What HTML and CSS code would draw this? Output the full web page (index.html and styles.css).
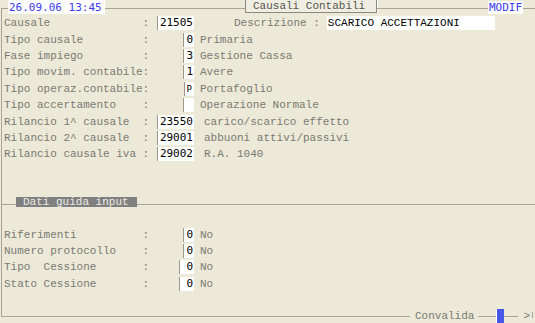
FILE: index.html
```
<!DOCTYPE html>
<html lang="it">
<head>
  <meta charset="UTF-8">
  <title>Causali Contabili</title>
  <link rel="stylesheet" href="styles.css">
</head>
<body>
  <div class="screen">
    <div class="topbar">
      <div class="corner"></div>
      <div class="stamp date">26.09.06 13:45</div>
      <div class="rule r1"></div>
      <div class="title">Causali Contabili</div>
      <div class="rule r2"></div>
      <div class="stamp mode">MODIF</div>
      <div class="rule"></div>
    </div>

    <div class="body">
      <div class="row">
        <span class="lbl">Causale              :</span>
        <span class="fld"><span class="box">21505</span></span>
        <span class="lbl desc-lbl">Descrizione :</span>
        <span class="box text-box">SCARICO ACCETTAZIONI</span>
      </div>
      <div class="row">
        <span class="lbl">Tipo causale         :</span>
        <span class="fld"><span class="box">0</span></span>
        <span class="desc">Primaria</span>
      </div>
      <div class="row">
        <span class="lbl">Fase impiego         :</span>
        <span class="fld"><span class="box">3</span></span>
        <span class="desc">Gestione Cassa</span>
      </div>
      <div class="row">
        <span class="lbl">Tipo movim. contabile:</span>
        <span class="fld"><span class="box">1</span></span>
        <span class="desc">Avere</span>
      </div>
      <div class="row">
        <span class="lbl">Tipo operaz.contabile:</span>
        <span class="fld"><span class="box small">P</span></span>
        <span class="desc">Portafoglio</span>
      </div>
      <div class="row">
        <span class="lbl">Tipo accertamento    :</span>
        <span class="fld"><span class="box"> </span></span>
        <span class="desc">Operazione Normale</span>
      </div>
      <div class="row">
        <span class="lbl">Rilancio 1^ causale  :</span>
        <span class="fld"><span class="box">23550</span></span>
        <span class="desc wide">carico/scarico effetto</span>
      </div>
      <div class="row">
        <span class="lbl">Rilancio 2^ causale  :</span>
        <span class="fld"><span class="box">29001</span></span>
        <span class="desc wide">abbuoni attivi/passivi</span>
      </div>
      <div class="row">
        <span class="lbl">Rilancio causale iva :</span>
        <span class="fld"><span class="box">29002</span></span>
        <span class="desc wide">R.A. 1040</span>
      </div>

      <div class="section">
        <div class="sec-line lead"></div>
        <div class="sec-title">Dati guida input</div>
        <div class="sec-line"></div>
      </div>

      <div class="rows-bottom">
        <div class="row">
          <span class="lbl">Riferimenti          :</span>
          <span class="fld"><span class="box">0</span></span>
          <span class="desc">No</span>
        </div>
        <div class="row">
          <span class="lbl">Numero protocollo    :</span>
          <span class="fld"><span class="box">0</span></span>
          <span class="desc">No</span>
        </div>
        <div class="row">
          <span class="lbl">Tipo  Cessione       :</span>
          <span class="fld"><span class="box wide-box">0</span></span>
          <span class="desc">No</span>
        </div>
        <div class="row">
          <span class="lbl">Stato Cessione       :</span>
          <span class="fld"><span class="box wide-box">0</span></span>
          <span class="desc">No</span>
        </div>
      </div>
    </div>

    <div class="footbar">
      <div class="foot-line first"></div>
      <div class="confirm">Convalida</div>
      <div class="foot-line short"></div>
      <div class="cursor"></div>
      <div class="foot-line short after"></div>
      <div class="next">&gt;</div>
      <div class="tick"></div>
    </div>
  </div>
</body>
</html>
```

FILE: styles.css
```
body {
  margin: 0;
  background: #ece9d8;
}

.screen {
  width: 535px;
  height: 323px;
  display: flex;
  flex-direction: column;
  background: #ece9d8;
  font-family: 'Liberation Mono', 'Courier New', monospace;
  font-size: 11px;
  color: #7a7973;
  overflow: hidden;
}

/* top bar */
.topbar {
  display: flex;
  align-items: flex-start;
  height: 15px;
  flex: none;
}

.corner {
  width: 6px;
  height: 7px;
  margin: 8px 0 0 1px;
  border-top: 1px solid #a8a598;
  border-left: 1px solid #a8a598;
}

.stamp {
  background: #fff;
  color: #3b3bf0;
  font-family: 'DejaVu Sans Mono', monospace;
  flex: none;
}

.date {
  width: 97px;
  height: 14px;
  line-height: 15px;
  padding-left: 1px;
  box-sizing: border-box;
}

.mode {
  width: 35px;
  margin-top: 1px;
  height: 13px;
  line-height: 13px;
  padding-left: 1px;
  box-sizing: border-box;
}

.rule {
  flex: 1;
  margin-top: 8px;
  border-top: 1px solid #a8a598;
}

.rule.r1 {
  flex: none;
  width: 140px;
}

.rule.r2 {
  flex: none;
  width: 111px;
}

.title {
  width: 132px;
  box-sizing: border-box;
  flex: none;
  height: 13px;
  line-height: 12px;
  padding-left: 7px;
  background: #f0eee3;
  color: #55554f;
  border-left: 1px solid #8a8880;
  border-right: 1px solid #8a8880;
  border-bottom: 1px solid #8a8880;
  box-shadow: 1px 0 0 #fff;
}

/* form body */
.body {
  flex: 1;
  margin-left: 1px;
  border-left: 1px solid #a8a598;
  padding-left: 2px;
}

.row {
  display: flex;
  align-items: center;
  height: 16.4px;
  white-space: pre;
}

.lbl {
  width: 152px;
  flex: none;
}

.fld {
  width: 38px;
  display: flex;
  justify-content: flex-end;
  flex: none;
}

.box {
  background: #fff;
  color: #000;
  font-family: 'DejaVu Sans Mono', monospace;
  height: 14px;
  line-height: 14px;
  padding: 0 1px 0 2px;
  border-left: 1px solid #9a9890;
}

.box.small {
  font-size: 9px;
  padding: 0 2px;
}

.wide-box {
  width: 11px;
  text-align: right;
}

.desc-lbl {
  width: auto;
  margin-left: 40px;
}

.text-box {
  width: 166px;
  margin-left: 7px;
  padding-left: 1px;
  font-family: 'Liberation Mono', 'Courier New', monospace;
  border-left: none;
}

.desc {
  margin-left: 6px;
}

.desc.wide {
  margin-left: 10px;
}

/* section header */
.section {
  display: flex;
  align-items: flex-start;
  height: 10px;
  margin: 34px 0 0 -2px;
}

.sec-line {
  flex: 1;
  margin-top: 7px;
  border-top: 1px solid #a8a598;
}

.sec-line.lead {
  flex: none;
  width: 14px;
}

.sec-title {
  background: #808080;
  color: #ecece6;
  height: 10px;
  line-height: 11px;
  padding: 0 8px 0 7px;
}

.rows-bottom {
  margin-top: 20px;
}

/* footer bar */
.footbar {
  display: flex;
  align-items: flex-start;
  height: 14px;
  flex: none;
}

.footbar > div {
  flex: none;
}

.foot-line {
  height: 7px;
  border-bottom: 1px solid #a8a598;
}

.foot-line.first {
  width: 408px;
  margin-left: 1px;
  border-left: 1px solid #a8a598;
}

.foot-line.short {
  width: 18px;
}

.foot-line.after {
  width: 14px;
}

.confirm {
  line-height: 14px;
  padding: 0 4px 0 5px;
}

.cursor {
  width: 7px;
  height: 14px;
  background: #4656e6;
  border-left: 1px solid #fff;
}

.next {
  line-height: 14px;
  margin-left: 5px;
}

.tick {
  width: 1px;
  height: 6px;
  margin: 3px 0 0 2px;
  background: #a8a598;
}
```
